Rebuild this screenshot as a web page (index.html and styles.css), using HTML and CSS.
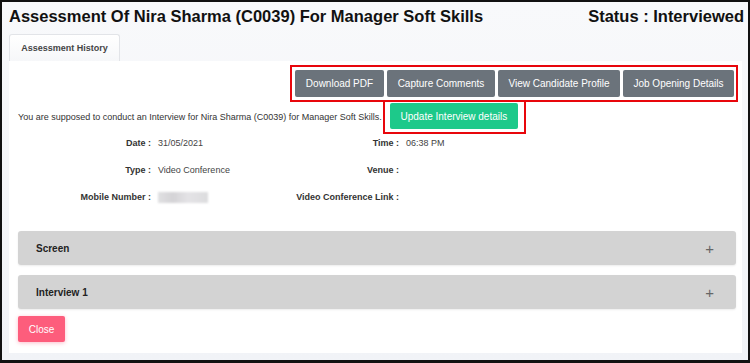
FILE: index.html
```html
<!DOCTYPE html>
<html lang="en">
<head>
  <meta charset="UTF-8" />
  <title>Assessment - Nira Sharma</title>
  <link rel="stylesheet" href="styles.css">
</head>
<body>
  <div class="frame">
    <div class="page-header">
      <h1>Assessment Of Nira Sharma (C0039) For Manager Soft Skills</h1>
      <h2 class="status">Status : Interviewed</h2>
    </div>
    <div class="tabs">
      <a class="tab active">Assessment History</a>
    </div>
    <div class="panel">
      <div class="actions">
        <div class="btn-group highlight">
          <button class="btn btn-gray">Download PDF</button>
          <button class="btn btn-gray">Capture Comments</button>
          <button class="btn btn-gray">View Candidate Profile</button>
          <button class="btn btn-gray">Job Opening Details</button>
        </div>
      </div>
      <div class="intro">
        <span>You are supposed to conduct an Interview for Nira Sharma (C0039) for Manager Soft Skills.</span>
        <div class="highlight update-box">
          <button class="btn btn-green">Update Interview details</button>
        </div>
      </div>
      <div class="details">
        <div class="label">Date :</div><div class="value">31/05/2021</div>
        <div class="label">Time :</div><div class="value">06:38 PM</div>
        <div class="label">Type :</div><div class="value">Video Conference</div>
        <div class="label">Venue :</div><div class="value"></div>
        <div class="label">Mobile Number :</div><div class="value"><span class="blurred"></span></div>
        <div class="label">Video Conference Link :</div><div class="value"></div>
      </div>
      <div class="accordion">
        <div class="acc-item">
          <span>Screen</span>
          <span class="plus">+</span>
        </div>
        <div class="acc-item">
          <span>Interview 1</span>
          <span class="plus">+</span>
        </div>
      </div>
      <button class="btn btn-close">Close</button>
    </div>
  </div>
</body>
</html>
```

FILE: styles.css
```css
* {
  box-sizing: border-box;
}
body {
  margin: 0;
  font-family: 'Liberation Sans', Arial, sans-serif;
  color: #333;
}
.frame {
  width: 750px;
  height: 363px;
  border: 2px solid #111;
  border-bottom-width: 3px;
  background: linear-gradient(#f8f9fb, #f1f3f7);
  overflow: hidden;
}
.page-header {
  display: flex;
  justify-content: space-between;
  align-items: center;
  height: 28px;
  padding: 0 4px 0 7px;
  margin-bottom: 4px;
}
.page-header h1,
.page-header h2 {
  margin: 0;
  font-size: 16.5px;
  font-weight: bold;
  color: #111;
}
.tabs {
  display: flex;
  padding-left: 7px;
}
.tab {
  display: block;
  width: 111px;
  height: 27px;
  line-height: 26px;
  text-align: center;
  font-size: 9px;
  font-weight: bold;
  color: #444;
  background: linear-gradient(#fff, #f6f7f9);
  border: 1px solid #e2e4e8;
  border-bottom: none;
  border-radius: 3px 3px 0 0;
}
.panel {
  margin: 0 6px 0 7px;
  height: 292px;
  background: #fff;
  padding: 4px 4px 0 9px;
}
.actions {
  display: flex;
  justify-content: flex-end;
}
.highlight {
  border: 2px solid #e8060c;
}
.btn-group {
  display: flex;
  gap: 3px;
  padding: 3px 2px 3px 3px;
}
.btn {
  font-family: 'Liberation Sans', Arial, sans-serif;
  border: none;
  border-radius: 2px;
  cursor: pointer;
  color: #fff;
  font-size: 10px;
  padding: 0;
  white-space: nowrap;
}
.btn-gray {
  background: #6b737b;
  height: 27px;
}
.btn-gray:nth-child(1) { width: 89px; }
.btn-gray:nth-child(2) { width: 108px; }
.btn-gray:nth-child(3) { width: 122px; }
.btn-gray:nth-child(4) { width: 111px; }
.intro {
  display: flex;
  align-items: center;
  margin-top: -2px;
  font-size: 9px;
  color: #333;
}
.update-box {
  margin-left: 1px;
  padding: 1px 6px 3px 5px;
}
.btn-green {
  background: #1dc98a;
  height: 26px;
  width: 128px;
}
.details {
  display: grid;
  grid-template-columns: 133px 114px 134px 1fr;
  row-gap: 14px;
  margin-top: 3px;
  font-size: 9px;
}
.label {
  text-align: right;
  font-weight: bold;
  color: #333;
  height: 13px;
  line-height: 13px;
}
.value {
  padding-left: 7px;
  color: #444;
  height: 13px;
  line-height: 13px;
}
.blurred {
  display: inline-block;
  width: 50px;
  height: 11px;
  background: linear-gradient(90deg, #e0e0e2, #d4d3d6 30%, #e4e3e6 60%, #dcdcde);
  filter: blur(1px);
  vertical-align: middle;
}
.accordion {
  display: flex;
  flex-direction: column;
  gap: 10px;
  margin-top: 27px;
  margin-right: 2px;
}
.acc-item {
  display: flex;
  justify-content: space-between;
  align-items: center;
  height: 34px;
  padding: 0 22px 0 18px;
  background: #d3d3d3;
  border-radius: 3px;
  box-shadow: 0 1px 2px rgba(0,0,0,0.08);
  font-size: 10px;
  font-weight: bold;
  color: #222;
}
.plus {
  font-weight: normal;
  font-size: 15px;
  color: #666;
}
.btn-close {
  margin-top: 7px;
  width: 47px;
  height: 26px;
  background: #fd5d7c;
  box-shadow: 0 1px 4px rgba(253,93,124,0.4);
}
```
